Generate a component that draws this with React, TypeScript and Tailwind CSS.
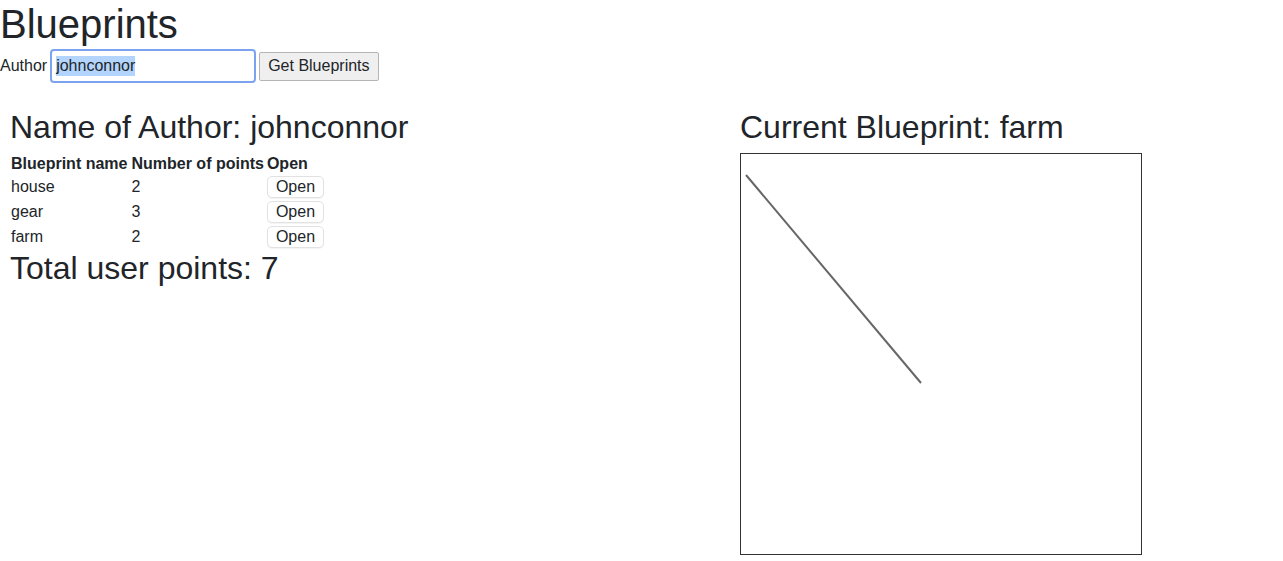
export default function App() {
  const blueprints = [
    { name: "house", points: 2 },
    { name: "gear", points: 3 },
    { name: "farm", points: 2 },
  ];

  return (
    <div className="bg-white text-[#212529] font-['Liberation_Sans',Arial,sans-serif] text-[16px] min-h-[561px]">
      <h1 className="text-[40px] leading-[48px] m-0">Blueprints</h1>

      <div className="flex items-center h-[36px]">
        <label className="mr-[3px]">Author</label>
        <div className="w-[206px] h-[34px] border-2 border-[#7ba3ef] rounded-[4px] flex items-center px-[4px]">
          <span className="bg-[#b3d4fc] leading-[20px]">johnconnor</span>
        </div>
        <button className="ml-[3px] h-[29px] px-[8px] bg-[#efefef] border border-[#b5b5b5] rounded-[2px] text-[16px]">
          Get Blueprints
        </button>
      </div>

      <div className="flex mt-[24px]">
        <div className="w-[740px] pl-[10px]">
          <h2 className="text-[32px] leading-[38px] mb-[8px]">
            Name of Author: johnconnor
          </h2>
          <table className="border-collapse">
            <thead>
              <tr className="h-[20px] font-bold text-left">
                <th className="pl-[1px] pr-[4px] leading-[20px]">Blueprint name</th>
                <th className="pr-[3px] leading-[20px]">Number of points</th>
                <th className="leading-[20px]">Open</th>
              </tr>
            </thead>
            <tbody>
              {blueprints.map((b) => (
                <tr key={b.name} className="h-[25px]">
                  <td className="pl-[1px]">{b.name}</td>
                  <td>{b.points}</td>
                  <td>
                    <button className="h-[22px] px-[8px] bg-white border border-[#e2e2e2] rounded-[5px] leading-[20px] shadow-[0_1px_1px_rgba(0,0,0,0.05)]">
                      Open
                    </button>
                  </td>
                </tr>
              ))}
            </tbody>
          </table>
          <h2 className="text-[32px] leading-[38px]">Total user points: 7</h2>
        </div>

        <div>
          <h2 className="text-[32px] leading-[38px] mb-[7px]">
            Current Blueprint: farm
          </h2>
          <div className="w-[402px] h-[402px] border border-[#333]">
            <svg width="400" height="400" viewBox="0 0 400 400">
              <line x1="5" y1="21" x2="180" y2="229" stroke="#666" strokeWidth="2" />
            </svg>
          </div>
        </div>
      </div>
    </div>
  );
}
